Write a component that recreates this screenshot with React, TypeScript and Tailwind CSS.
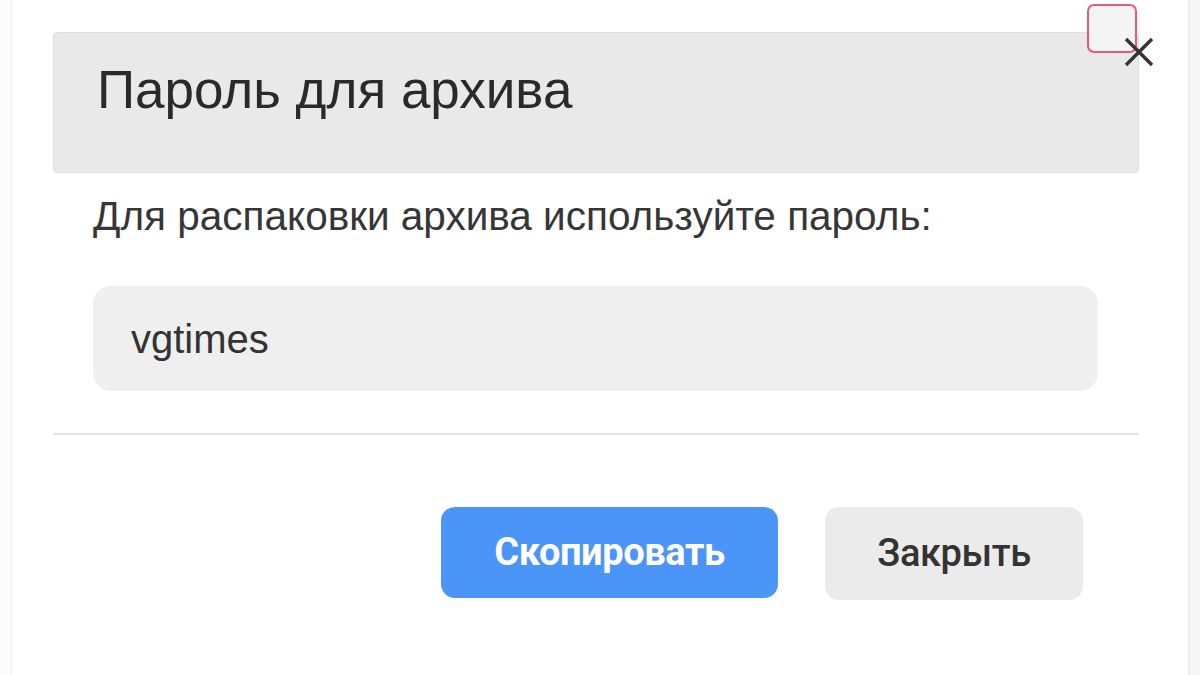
import React from "react";

export default function App() {
  return (
    <div className="flex h-[675px] w-[1200px] overflow-hidden bg-[#fbfbfb]" style={{ fontFamily: '"Liberation Sans", Arial, sans-serif' }}>
      <div className="w-[12px] border-r border-[#efefef] bg-[#fbfbfb]" />
      <div className="relative flex flex-1 flex-col bg-white">
        <div className="ml-[41px] mt-[32px] flex w-[1086px] flex-col">
          <div className="flex h-[141px] items-center rounded-[4px] border border-[#dedede] bg-[#e9e9e9] pl-[43px]">
            <h1 className="pb-[26px] text-[53px] leading-none text-[#2a2a2a]">Пароль для архива</h1>
          </div>
          <p className="ml-[40px] mt-[19px] text-[40.5px] leading-[48px] text-[#363636]">Для распаковки архива используйте пароль:</p>
          <div className="ml-[40px] mt-[46px] flex h-[105px] w-[1005px] items-center rounded-[18px] bg-[#efefef] pl-[38px]">
            <span className="text-[40px] leading-none text-[#333]">vgtimes</span>
          </div>
          <div className="mt-[42px] h-[2px] bg-[#e2e2e2]" />
          <div className="flex h-[205px] items-start justify-end gap-[47px] bg-white pr-[56px] pt-[72px]" style={{ fontFamily: 'Roboto, "Liberation Sans", sans-serif' }}>
            <button className="h-[91px] w-[337px] rounded-[14px] bg-[#4a95f7] text-[38px] font-bold tracking-[-0.4px] text-white">Скопировать</button>
            <button className="h-[93px] w-[258px] rounded-[14px] bg-[#ebebeb] text-[38px] font-medium tracking-[-0.4px] text-[#333]">Закрыть</button>
          </div>
        </div>
        <div className="absolute left-[1075px] top-[4px] h-[49px] w-[50px] rounded-[7px] border-2 border-[#e8587a] bg-[#f4f4f4]" />
        <svg className="absolute left-[1112px] top-[37px]" width="30" height="30" viewBox="0 0 30 30">
          <path d="M2 2 L28 28 M28 2 L2 28" stroke="#333" strokeWidth="3.4" strokeLinecap="butt" />
        </svg>
      </div>
      <div className="w-[12px] border-l border-[#ece8ea] bg-[#f7f5f6]" />
    </div>
  );
}
